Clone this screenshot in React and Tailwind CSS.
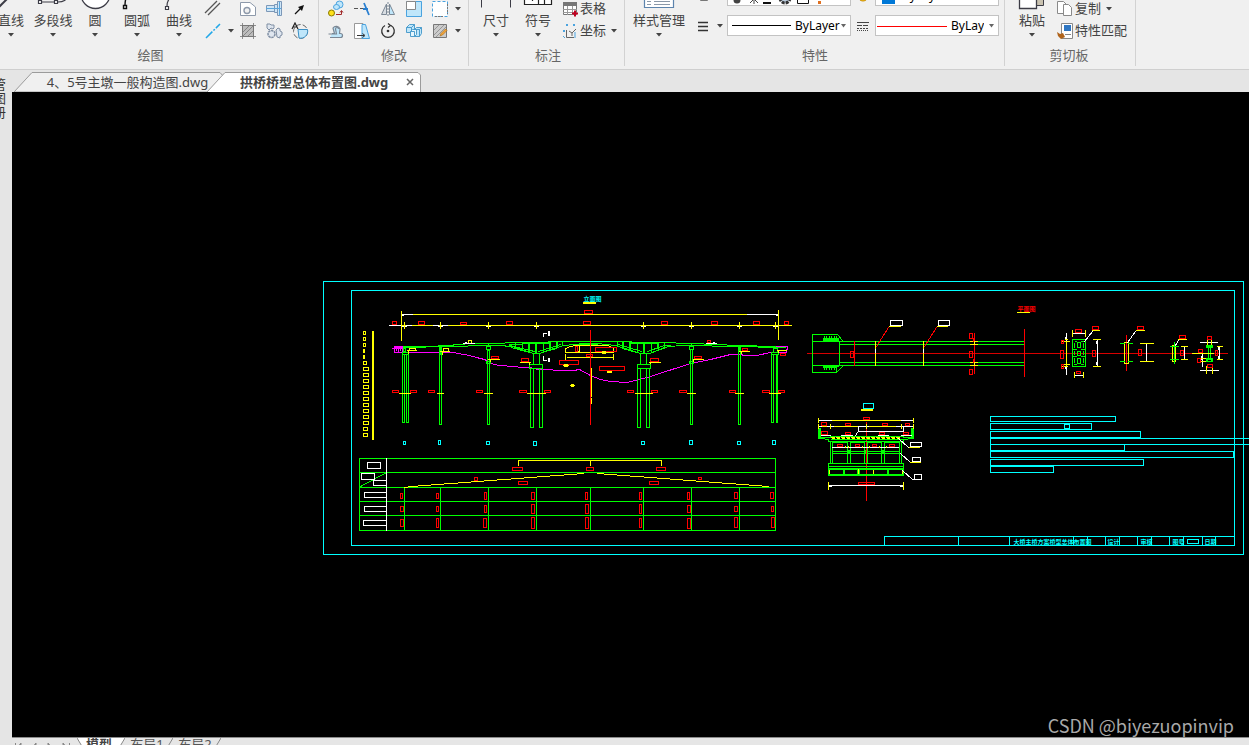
import React from "react";

const GREEN = "#00ff00";
const RED = "#ff0000";
const YELLOW = "#ffff00";
const CYAN = "#00ffff";
const MAGENTA = "#ff00ff";
const WHITE = "#ffffff";

const INK = "#3c3c46";
const BLUE = "#4aa3df";
const SKY = "#bfe6fa";
const STEEL = "#7b8794";

// big ribbon icons, 32 x 32
const bigIcons = {
  line: <path d="M2 30L15 17" stroke={INK} strokeWidth="2" />,
  polyline: (
    <g stroke={INK} fill="#fff" strokeWidth="1.2">
      <path d="M5 23H17M21 23C27 23 29 21 31 17" fill="none" />
      <path d="M1.500 21.500h3v3h-3zM17.500 21.500h3v3h-3z" />
    </g>
  ),
  circle: <circle cx="16.500" cy="15" r="14.500" fill="#fff" stroke={INK} strokeWidth="1.300" />,
  arc: (
    <g stroke="#111" fill="#fff" strokeWidth="1.400">
      <path d="M4 26C4 18 8 10 20 6" fill="none" />
      <path d="M2.500 26.500h3v3h-3z" />
    </g>
  ),
  curve: (
    <g stroke={INK} fill="#fff" strokeWidth="1.200">
      <path d="M4 27C4 20 7 22 8 14" fill="none" />
      <path d="M2.500 27.500h3v3h-3z" />
    </g>
  ),
  dimension: <path d="M1.500 6V28.500M30.500 6V28.500M1.500 12.500H30.500" stroke={INK} fill="none" />,
  symbol: (
    <g stroke="#222" fill="#fff" strokeWidth="1.200">
      <path d="M2.500 8.500h27v17h-27z" />
      <path d="M10.500 8V22M16.500 8V25M22.500 8V25" fill="none" />
    </g>
  ),
  styles: (
    <g stroke="#5d84ad" fill="#fff">
      <path d="M1.500 4.500h29v24h-29z" strokeWidth="1.200" />
      <path d="M4 22.500h4M11 22.500h16M4 25.500h4M11 25.500h16" stroke="#8b98a8" fill="none" />
    </g>
  ),
  paste: (
    <g stroke={INK}>
      <path d="M20.500 6.500h7v20h-7z" fill="#c9c2b0" />
      <path d="M3.500 8.500h17v21h-17z" fill="#fff" strokeWidth="1.300" />
    </g>
  ),
};

// small ribbon icons, 18 x 18
const icons = {
  doubleLine: <path d="M1 13L13 1M4 15L16 3" stroke="#555" strokeWidth="1.300" />,
  ray: <path d="M2 16L16 2" stroke="#22a7e8" strokeWidth="1.500" strokeDasharray="9 1.500 2 1.500" />,
  wipeout: (
    <g stroke="#8d99aa" fill="#fff">
      <path d="M1.500 2.500H11L16.500 7V15.500H1.500Z" />
      <circle cx="8" cy="10.500" r="3" fill="#f0f0f0" strokeWidth="1.400" />
    </g>
  ),
  bolt: (
    <g stroke="#7c98b8" fill="#cfe6f7">
      <path d="M1.500 5.500h8v6h-8zM9.500 4.500h3v8h-3zM12.500 1.500h4v14h-4z" />
      <path d="M1 8.500H16M14.500 2V15" stroke="#5aa6dc" fill="none" />
    </g>
  ),
  arrow: (
    <g>
      <path d="M4 14L10 8" stroke="#111" strokeWidth="1.200" />
      <path d="M13 5L11 11L7 7Z" fill="#111" />
    </g>
  ),
  hatch: (
    <g stroke="#777">
      <path d="M3.500 3.500h11v11h-11z" fill="#bcbcbc" />
      <path d="M1 3.500H17M1 14.500H17M3.500 1V17M14.500 1V17M4 10L10 4M4 14L14 4M9 14L14 9" fill="none" strokeWidth=".8" />
    </g>
  ),
  gears: (
    <g stroke="#7f8ea3" fill="#dfe6ef">
      <path d="M2 2h3l1 1h3v3l-1 1-2-1-2 2-2-2z" />
      <path d="M11 8l2-2 2 1v2l2 1v3l-2 1v2l-3-1z" />
      <circle cx="6.500" cy="12" r="3.500" strokeWidth="1.500" strokeDasharray="2.500 .6" />
    </g>
  ),
  region: (
    <g fill="none">
      <circle cx="9.500" cy="9.500" r="7" stroke="#666" strokeDasharray="5 2" />
      <path d="M7 7.500H16.500A7 7 0 0 1 8 16Z" fill={SKY} stroke="#3b8fc4" />
      <path d="M1 7L4 1L7 7M2 5H6" stroke="#222" strokeWidth="1.200" />
    </g>
  ),
  copyObject: (
    <g>
      <circle cx="12.500" cy="4.500" r="3.500" fill={SKY} stroke={BLUE} />
      <ellipse cx="9.500" cy="7" rx="3" ry="2.500" fill={SKY} stroke={BLUE} />
      <circle cx="4.500" cy="13" r="3" fill="#ffe11a" stroke="#8a7a00" />
      <path d="M9 14.500H14.500V11M13 12.500L14.500 10.500L16 12.500" stroke="#a02828" fill="none" />
    </g>
  ),
  extend: (
    <g>
      <path d="M1 8.500H5M7 8.500H11" stroke="#555" />
      <path d="M11 3L16 15M10 9H15" stroke="#2a7fd0" strokeWidth="1.800" />
    </g>
  ),
  mirror: (
    <g>
      <path d="M7.500 4V14.500H2.500Z" fill="#d8dde2" stroke={STEEL} />
      <path d="M10.500 4V14.500H15.500Z" fill={SKY} stroke={STEEL} />
      <path d="M9 2V16" stroke={STEEL} strokeDasharray="2 1" />
    </g>
  ),
  scale: (
    <g>
      <path d="M1.500 1.500h15v15h-15z" fill={SKY} stroke={BLUE} />
      <path d="M1.500 1.500h9v8h-9z" fill="#fff" stroke="#888" />
    </g>
  ),
  explode: (
    <g>
      <path d="M1.500 1.500h15v15h-15z" fill="#fff" stroke={BLUE} strokeDasharray="3 2" />
      <path d="M4 16.500H13M16.500 4V14" stroke="#777" strokeDasharray="2 1" />
    </g>
  ),
  offset: (
    <g fill={SKY} stroke={STEEL} strokeWidth="1.200">
      <path d="M3 15.500H13.500A2 2 0 0 0 13.500 11.500H12.500L13 7A4 4 0 0 0 6 6L7.500 11.500H5" />
      <path d="M1.500 12H9.500L8.500 7A1.500 1.500 0 0 1 11.500 7" fill="none" />
    </g>
  ),
  stretch: (
    <g>
      <path d="M1.500 1.500H10V16.500H1.500Z" fill="#fff" stroke="#999" />
      <path d="M9 2.500H12.500L16.500 16.500H9Z" fill={SKY} stroke={BLUE} />
      <path d="M4 13.500H11M9.500 11.500L12 13.500L9.500 15.500" stroke="#333" fill="none" />
    </g>
  ),
  rotate: (
    <g fill="none" stroke="#333" strokeWidth="1.300">
      <path d="M6 3.500A6.300 6.300 0 1 0 12 3.500" />
      <path d="M9 1.500L11.500 3.500L9 5.500" />
      <circle cx="9" cy="9" r=".7" fill="#222" />
    </g>
  ),
  array: (
    <g stroke="#3f95c8" fill={SKY} strokeWidth=".9">
      <path d="M1.500 5.500l3-3h5v5l-3 3h-5zM1.500 5.500h5v5M6.500 5.500l3-3" />
      <path d="M9.500 7.500l2-2h5v6l-2 3h-5zM9.500 7.500h5v7M14.500 7.500l2-2" />
      <path d="M5.500 9.500l2-2h4v5l-2 2h-4zM5.500 9.500h4v5" fill="#e6f6fd" />
    </g>
  ),
  editHatch: (
    <g>
      <path d="M2.500 2.500h13v13h-13z" fill="#ccc" stroke="#777" />
      <path d="M3 8L8 3M3 13L13 3M5 15L15 5" stroke="#888" strokeWidth=".8" />
      <path d="M9 14L10 11.500L14.500 7L16 8.500L11.500 13Z" fill="#f2a43a" stroke="#a86a12" strokeWidth=".6" />
    </g>
  ),
  table: (
    <g>
      <path d="M2.500 2.500h13v12h-13z" fill="#fff" stroke="#777" />
      <path d="M2 2h14v4H2z" fill="#777" />
      <path d="M2 9.500H16M2 12.500H16M6.500 6V15M11.500 6V15" stroke="#999" />
      <path d="M11 13.500H17M14 10.500V16.500" stroke="#c00020" strokeWidth="2" />
    </g>
  ),
  coordinate: (
    <g fill="none" stroke="#666">
      <path d="M5.500 8V15.500H13M8 9L11 11L15 7M11 11V14" />
      <path d="M5 2l2 2M7 2L5 4M12 2l2 2M14 2l-2 2M2 8l2 2M4 8l-2 2M2 14l2 2M14 10v6" stroke={BLUE} />
    </g>
  ),
  lineweight: <path d="M4 5.500H14M4 9.500H14M4 13.500H14" stroke="#333" strokeWidth="1.300" />,
  linetype: (
    <g stroke="#444">
      <path d="M3 5.500H15" />
      <path d="M3 8.500H15" strokeDasharray="5 1" />
      <path d="M3 11.500H15" strokeDasharray="2 1" />
      <path d="M3 13.500H15" strokeDasharray="1 1" />
    </g>
  ),
  layer: <path d="M6.500 4.500h7v9h-7zM8 8.500h4M8 11.500h2" stroke="#777" fill="#fff" />,
  colors: (
    <g>
      <circle cx="9" cy="9" r="5" fill="#ffd21a" stroke="#c98a00" />
      <path d="M9 9L13 5L14 9Z" fill="#e04040" />
    </g>
  ),
  copy: (
    <g fill="#fff" stroke="#8a8a8a">
      <path d="M1.500 1.500h6l3 3v9h-9z" />
      <path d="M7.500 4.500h5l3 3v8h-8z" />
    </g>
  ),
  matchProps: (
    <g>
      <path d="M5.500 1.500h11v15h-11z" fill="#fff" stroke="#888" />
      <path d="M8 3h7v6H8z" fill="#2f76c2" />
      <path d="M9 12.500H15" stroke="#888" />
      <path d="M1 10L4 12L7 11L9 15L5 17L2 14Z" fill="#b0641c" />
    </g>
  ),
};

const Icon = ({ name }) => (
  <svg viewBox="0 0 18 18" fill="none" className="size-[18px] shrink-0" aria-hidden="true">
    {icons[name]}
  </svg>
);

const Caret = ({ className = "" }) => (
  <svg viewBox="0 0 6 4" className={`h-1 w-[6px] shrink-0 ${className}`} aria-hidden="true">
    <path d="M0 0h6L3 3.500z" fill="#444" />
  </svg>
);

const BigButton = ({ icon, label, wide }) => (
  <button className={`flex shrink-0 flex-col items-center text-[#444] ${wide ? "w-14" : "w-[42px]"}`}>
    <svg viewBox="0 0 32 32" fill="none" className="size-8" aria-hidden="true">
      {bigIcons[icon]}
    </svg>
    <span className="mt-px whitespace-nowrap leading-4">{label}</span>
    <Caret className="mt-[5px] mb-[3px]" />
  </button>
);

const IconButton = ({ icon, label }) => (
  <button aria-label={label} className="flex w-[26px] justify-center">
    <Icon name={icon} />
  </button>
);

const DropButton = ({ label }) => (
  <button aria-label={label} className="flex h-[18px] w-[9px] items-center justify-center">
    <Caret />
  </button>
);

const TextButton = ({ icon, label, drop }) => (
  <button className="flex h-[18px] items-start gap-px whitespace-nowrap text-[#444]">
    <Icon name={icon} />
    <span className="leading-4">{label}</span>
    {drop ? <Caret className="mx-1 self-center" /> : null}
  </button>
);

const Panel = ({ title, className = "", children }) => (
  <section className={`flex h-[66px] shrink-0 flex-col justify-end border-r border-[#d2d2d2] pb-[3px] ${className}`}>
    <div className="flex items-end">{children}</div>
    <h2 className="mt-[7px] text-center leading-4 text-[#666]">{title}</h2>
  </section>
);

const PropSelect = ({ label, options, className = "", children }) => (
  <div className="relative h-[21px] w-[124px]">
    <select
      aria-label={label}
      className={`block h-full w-full appearance-none border border-[#c3c3c3] bg-white font-['Noto_Sans'] text-xs text-black ${className}`}
    >
      {options.map(o => (
        <option key={o}>{o}</option>
      ))}
    </select>
    <svg viewBox="0 0 124 21" fill="none" className="pointer-events-none absolute inset-0" aria-hidden="true">
      {children}
      <path d="M114 9h5l-2.500 3.500z" fill="#666" />
    </svg>
  </div>
);

const Ribbon = () => (
  <header className="flex h-[70px] shrink-0 items-end overflow-hidden border-b border-[#cfcfcf] bg-[#f0f0f0] pb-[3px]">
    <Panel title="绘图" className="pr-[5px] [&>h2]:pr-3">
      <div className="-ml-[10px] flex">
        <BigButton icon="line" label="直线" />
        <BigButton icon="polyline" label="多段线" />
        <BigButton icon="circle" label="圆" />
        <BigButton icon="arc" label="圆弧" />
        <BigButton icon="curve" label="曲线" />
      </div>
      <div className="grid grid-cols-[26px_9px_26px_26px_26px] gap-y-1">
        <IconButton icon="doubleLine" label="双线" />
        <span />
        <IconButton icon="wipeout" label="区域覆盖" />
        <IconButton icon="bolt" label="零件" />
        <IconButton icon="arrow" label="箭头" />
        <IconButton icon="ray" label="射线" />
        <DropButton label="更多线型" />
        <IconButton icon="hatch" label="填充" />
        <IconButton icon="gears" label="机械" />
        <IconButton icon="region" label="局部视图" />
      </div>
    </Panel>

    <Panel title="修改" className="pr-[6px] pl-1 [&>h2]:pl-[3px]">
      <div className="grid grid-cols-[26px_26px_26px_26px_26px_9px] gap-y-1">
        <IconButton icon="copyObject" label="复制对象" />
        <IconButton icon="extend" label="延伸" />
        <IconButton icon="mirror" label="镜像" />
        <IconButton icon="scale" label="缩放" />
        <IconButton icon="explode" label="分解" />
        <DropButton label="更多分解" />
        <IconButton icon="offset" label="偏移" />
        <IconButton icon="stretch" label="拉伸" />
        <IconButton icon="rotate" label="旋转" />
        <IconButton icon="array" label="阵列" />
        <IconButton icon="editHatch" label="编辑填充" />
        <DropButton label="更多编辑" />
      </div>
    </Panel>

    <Panel title="标注" className="pr-[3px] pl-[6px]">
      <BigButton icon="dimension" label="尺寸" />
      <BigButton icon="symbol" label="符号" />
      <div className="ml-0.5 flex flex-col gap-1">
        <TextButton icon="table" label="表格" />
        <TextButton icon="coordinate" label="坐标" drop />
      </div>
    </Panel>

    <Panel title="特性" className="pr-[5px] pl-[6px]">
      <BigButton icon="styles" label="样式管理" wide />
      <div className="ml-[7px] grid grid-cols-[18px_9px_124px_18px_124px] items-center gap-x-[3px] gap-y-[9px] pb-1">
        <Icon name="layer" />
        <span />
        <PropSelect label="图层" options={["0"]} className="pl-[96px]">
          <circle cx="10" cy="15" r="3.500" fill="#444" />
          <path d="M27 9V19M22 14H32M23 10L31 18M31 10L23 18" stroke="#444" />
          <path d="M36 17h8v2h-8z" fill="#111" />
          <circle cx="58" cy="13" r="5" stroke="#333" strokeWidth="3" strokeDasharray="3 1" fill="#bcd" />
          <path d="M70.500 6.500h11v12h-11z" fill="#fff" stroke="#111" />
          <path d="M91 16h3v3h-3z" fill="#e07020" />
        </PropSelect>
        <Icon name="colors" />
        <PropSelect label="颜色" options={["ByLayer"]} className="pl-[26px]">
          <path d="M7 9h13v10H7z" fill="#0078d7" />
        </PropSelect>
        <Icon name="lineweight" />
        <DropButton label="线宽设置" />
        <PropSelect label="线宽" options={["ByLayer"]} className="pr-2 pl-[67px]">
          <path d="M5 10.500H64" stroke="#000" />
        </PropSelect>
        <Icon name="linetype" />
        <PropSelect label="线型" options={["ByLayer"]} className="pr-[14px] pl-[75px]">
          <path d="M2 11.500H72" stroke="#f00" />
        </PropSelect>
      </div>
    </Panel>

    <Panel title="剪切板" className="pr-2 pl-[6px]">
      <BigButton icon="paste" label="粘贴" />
      <div className="ml-[3px] flex flex-col gap-1">
        <TextButton icon="copy" label="复制" drop />
        <TextButton icon="matchProps" label="特性匹配" />
      </div>
    </Panel>
  </header>
);

const FileTabs = () => (
  <nav className="flex h-[22px] shrink-0 items-end pl-0.5">
    <button className="relative h-5 w-[210px] pl-[17px] text-[#444]">
      <svg viewBox="0 0 210 20" className="absolute inset-0 h-full w-full" aria-hidden="true">
        <path d="M0 20L18 .5H206L210 5V20Z" fill="#f0f0f0" stroke="#9b9b9b" />
      </svg>
      <span className="relative block whitespace-nowrap leading-[18px]">4、5号主墩一般构造图.dwg</span>
    </button>
    <div className="relative -ml-[17px] flex h-5 w-[214px] items-center justify-between pr-[5px] pl-[33px]">
      <svg viewBox="0 0 214 20" className="absolute inset-0 h-full w-full" aria-hidden="true">
        <path d="M0 20L18 .5H211L213.500 3V20" fill="#fff" stroke="#9b9b9b" />
      </svg>
      <button className="relative whitespace-nowrap font-bold leading-[18px] text-[#444]">拱桥桥型总体布置图.dwg</button>
      <button aria-label="关闭" className="relative flex size-3 items-center justify-center">
        <svg viewBox="0 0 8 8" className="size-2" aria-hidden="true">
          <path d="M1 1L7 7M7 1L1 7" stroke="#666" strokeWidth="1.500" />
        </svg>
      </button>
    </div>
  </nav>
);

// corner coordinates of each box: [left, top, right, bottom]
const Boxes = ({ color, of }) => (
  <path stroke={color} d={of.map(([l, t, r, b]) => `M${l} ${t}H${r}V${b}H${l}Z`).join("")} />
);

const Lines = ({ color, d }) => <path stroke={color} d={d} />;

// horizontal runs: [left, y, right]
const Runs = ({ color, of }) => (
  <path stroke={color} d={of.map(([l, y, r]) => `M${l} ${y}H${r}`).join("")} />
);

const Frame = () => (
  <g>
    <Boxes color={CYAN} of={[[323, 281, 1243, 554], [351, 290, 1234, 545], [1187, 539, 1198, 543]]} />
    <Lines color={CYAN} d="M884 545V536H1234" />
    <Lines
      color={CYAN}
      d={[958, 1009, 1073, 1087, 1105, 1119, 1137, 1151, 1169, 1183, 1202, 1215].map(x => `M${x} 536V545`).join("")}
    />
    <g fill={CYAN} fontSize="6" fontWeight="700">
      <text x="1013" y="543">大桥主桥方案桥型总体布置图</text>
      <text x="1107" y="543">设计</text>
      <text x="1140" y="543">审核</text>
      <text x="1172" y="543">图号</text>
      <text x="1204" y="543">日期</text>
    </g>
  </g>
);

const Notes = () => (
  <g>
    <Boxes
      color={CYAN}
      of={[
        [990, 416, 1115, 421], [990, 423, 1091, 429], [1064, 424, 1069, 428], [990, 431, 1140, 437],
        [990, 444, 1124, 450], [990, 451, 1233, 457], [990, 459, 1143, 465], [990, 466, 1053, 472],
      ]}
    />
    <Lines color={CYAN} d="M1260 438H990V444H1260" />
  </g>
);

const scaleMarks = Array.from({ length: 10 }, (_, i) => [363, 367 + 6 * i, 368, 370 + 6 * i]);
const axes = [404, 440, 488, 536, 643, 691, 739, 775];

const Elevation = () => (
  <g>
    <text x="583" y="300" fill={CYAN} fontSize="6" fontWeight="700">立面图</text>
    <Boxes color={YELLOW} of={[[583, 302, 595, 303]]} />

    <Boxes
      color={YELLOW}
      of={[
        [372, 331, 373, 439], [363, 331, 365, 334], [363, 337, 365, 340], [363, 343, 365, 346],
        [363, 349, 364, 352], [363, 355, 364, 358], [363, 361, 366, 364],
        ...scaleMarks, [363, 427, 367, 430], [363, 433, 367, 436],
      ]}
    />

    {/* overall and span dimensions */}
    <Lines color={YELLOW} d="M401 311V340M778 310V339M401 314H778M401 325H791" />
    <Lines color={YELLOW} d={axes.map(x => `M${x} 322V328`).join("")} />
    <Lines color={WHITE} d={axes.map(x => `M${x - 2} 326H${x - 1}M${x + 1} 326H${x + 2}`).join("")} />
    <Runs color={WHITE} of={[[402, 314, 412], [747, 314, 777], [389, 325, 400], [406, 325, 411], [433, 325, 438], [442, 325, 447], [402, 315, 403], [776, 315, 777]]} />
    <Boxes
      color={RED}
      of={[
        [392, 321, 396, 324], [418, 321, 424, 324], [460, 322, 466, 324], [506, 321, 512, 324],
        [583, 321, 590, 324], [584, 310, 592, 313], [661, 321, 667, 324], [711, 321, 717, 324],
        [753, 321, 759, 324], [784, 321, 788, 324],
      ]}
    />

    {/* ground line */}
    <Lines
      color={MAGENTA}
      d="M394 346V352H453L463 354L469 355L476 357L484 359L490 362L493 364L500 365L512 366L522 367H529L538 369H550L555 370H573L579 369L590 375L600 379L610 381L627 382L650 376L690 363L710 359L730 354H741L743 355H756L770 352H786V350L787 348V346H775"
    />
    <Lines color={MAGENTA} d="M394 346H403M392 348H403M394 347H402M396 349V350M398 349V351M400 349V350M402 349V351" />

    {/* deck and haunched girders */}
    <Lines color={GREEN} d="M403 346H422L453 345V344L477 343H504L505 342H548V341H631V342H675L676 343H703L704 344H726L727 345H756L757 346H775L776 347H785" />
    <Lines color={GREEN} d="M403 347H425V346H467L468 345H505M676 345H711L712 346H757L758 347H785" />
    <Lines color={GREEN} d="M522 343H550M630 343H658M658 342H664V345H670" />
    <Lines color={GREEN} d="M505 346H512L533 353H539L550 349L557 347L563 345L575 344L583 343H597L605 344L615 345L640 353H649L668 346H674" />
    <Lines color={GREEN} d="M509 344H522M509 345L534 351M538 351L560 344M575 345L583 344H597M618 344L641 351M647 351L664 345M511 347L529 352M545 351L556 348M622 348L636 352M652 352L664 347" />
    <Lines color={GREEN} d="M515 343V347M522 343V349M528 343V350M529 343V351M535 343V352M536 343V352M543 343V350M549 342V348M550 342V348M556 342V346M557 342V346M562 342V345M617 342V345M622 342V347M623 342V347M629 342V349M630 342V350M637 343V351M643 343V352M644 343V352M651 343V351M657 343V348M658 343V348M664 343V346" />

    {/* piers */}
    <Boxes
      color={GREEN}
      of={[
        [402, 354, 404, 422], [406, 354, 408, 422], [402, 352, 408, 354], [403, 348, 405, 351],
        [439, 354, 441, 424], [439, 347, 441, 353],
        [487, 350, 489, 424], [486, 346, 490, 349], [486, 361, 490, 363],
        [533, 353, 539, 364], [529, 364, 542, 368], [530, 368, 533, 427], [539, 368, 542, 427],
        [640, 353, 646, 364], [637, 364, 650, 368], [637, 368, 640, 427], [646, 368, 649, 427],
        [690, 349, 692, 424], [689, 346, 693, 349], [689, 361, 693, 363],
        [738, 347, 740, 424],
        [771, 354, 773, 422], [776, 354, 777, 422], [771, 352, 778, 354], [773, 348, 777, 352],
      ]}
    />
    <Lines color={GREEN} d="M440 347V353M488 343V346M691 343V346M739 347V350" />

    {/* level marks */}
    <Boxes color={YELLOW} of={[[409, 348, 415, 350], [443, 348, 448, 351], [468, 340, 471, 343], [575, 345, 579, 351]]} />
    <Runs
      color={YELLOW}
      of={[
        [407, 350, 416], [440, 351, 449], [488, 359, 499], [520, 362, 530], [649, 362, 660],
        [693, 359, 703], [739, 351, 749], [777, 350, 786],
        [399, 393, 410], [437, 393, 443], [484, 393, 492], [527, 393, 545],
        [635, 393, 652], [687, 393, 695], [735, 393, 743], [769, 393, 780],
      ]}
    />
    <Lines color={YELLOW} d="M408 350V353M442 351V354M490 359V361M529 362V364M650 362V363M693 359V361M741 351V353M778 350V352" />
    <Runs color={WHITE} of={[[463, 343, 474], [465, 342, 466], [706, 343, 716], [713, 342, 714]]} />
    <Lines color={WHITE} d="M543 336V333H546M543 356V360H546M548 331V335M549 331V335M548 358V361M549 358V361" />
    <Boxes
      color={RED}
      of={[
        [491, 356, 498, 358], [521, 358, 528, 361], [650, 358, 658, 361], [694, 356, 701, 358],
        [742, 348, 747, 350], [780, 353, 785, 355], [707, 340, 710, 342],
        [392, 390, 398, 392], [410, 390, 416, 392], [428, 390, 434, 392], [476, 390, 482, 392],
        [519, 390, 526, 392], [544, 390, 550, 392], [627, 390, 633, 392], [651, 390, 657, 392],
        [679, 390, 686, 392], [729, 390, 735, 392], [762, 390, 769, 392], [778, 390, 784, 392],
      ]}
    />

    {/* navigation clearance */}
    <Lines color={YELLOW} d="M565 352V348L570 346L575 345H608L613 348V352M565 352H613M565 354V359M613 354V359M567 357H612" />
    <Boxes
      color={RED}
      of={[
        [575, 346, 577, 351], [595, 347, 616, 351], [586, 354, 592, 356],
        [559, 360, 578, 364], [599, 366, 624, 370],
      ]}
    />
    <Lines color={YELLOW} d="M602 351H605M602 352H605M602 353H605M564 364H567M563 365H568M564 366H567M607 371H611M607 372H611M571 384H573M570 385H574M571 386H573" />
    <Lines color={YELLOW} d="M591 368V396M591 398V403" />
    <Lines color={RED} d="M590 330V424" />
    <Boxes
      color={CYAN}
      of={[
        [403, 441, 405, 444], [438, 440, 440, 444], [486, 441, 489, 444], [533, 441, 536, 445],
        [641, 441, 644, 444], [689, 440, 692, 444], [737, 441, 740, 444], [772, 440, 775, 444],
      ]}
    />
  </g>
);

const ProfileTable = () => (
  <g>
    <Boxes color={GREEN} of={[[359, 458, 775, 530]]} />
    <Lines color={GREEN} d="M359 472H775M359 487H775M359 501H775M359 515H775M360 486L386 472" />
    <Lines color={GREEN} d={[404, 440, 488, 536, 590, 643, 691, 739].map(x => `M${x} 487V530`).join("")} />
    <Lines color={WHITE} d="M386 458V530" />
    <Boxes
      color={WHITE}
      of={[
        [367, 462, 380, 468], [361, 473, 374, 479], [373, 480, 386, 485],
        [364, 492, 386, 497], [364, 506, 386, 511], [363, 520, 386, 525],
      ]}
    />
    <Lines color={YELLOW} d="M518 465V460H661V465M590 460V465M404 487L411 486L583 473M597 473L768 486" />
    <Boxes
      color={RED}
      of={[
        [512, 467, 522, 470], [586, 467, 593, 470], [656, 467, 665, 470],
        [474, 477, 477, 480], [518, 481, 527, 484], [649, 481, 658, 484], [698, 477, 701, 479],
        [400, 493, 402, 498], [436, 493, 438, 498], [484, 492, 486, 499], [531, 492, 534, 499],
        [585, 492, 587, 499], [639, 492, 641, 499], [687, 492, 689, 499], [734, 492, 737, 498], [770, 492, 773, 498],
        [400, 506, 403, 511], [436, 506, 438, 511], [484, 505, 486, 512], [531, 504, 534, 513],
        [585, 504, 588, 513], [639, 504, 641, 513], [687, 505, 690, 512], [734, 506, 737, 511], [771, 506, 773, 511],
        [400, 519, 403, 526], [436, 518, 438, 527], [483, 518, 486, 527], [531, 517, 534, 528],
        [585, 517, 588, 528], [639, 518, 641, 527], [687, 518, 690, 528], [734, 517, 737, 527], [771, 517, 774, 527],
      ]}
    />
  </g>
);

const PlanView = () => (
  <g>
    <text x="1017" y="310" fill={RED} fontSize="6" fontWeight="700">平面图</text>
    <Runs color={YELLOW} of={[[1017, 312, 1029]]} />
    <Lines color="#d80000" d="M807 353H1227" />
    <Lines color={GREEN} d="M837 334H812V372H836M812 341H1024M839 344H1024M839 362H1024M812 365H1024M839 341V365M837 334L842 340M836 336V341M836 372L842 366M836 365V371" />
    <Lines color={GREEN} d="M823 338H838M823 339H838M823 340H838M823 366H838M823 367H836" />
    <Lines color={GREEN} d={[824, 826, 829, 831, 834].map(x => `M${x} 336V338M${x} 368V369`).join("")} />
    <Lines color={YELLOW} d="M875 341V365M923 341V365M970 341H977M970 344H977M970 362H977M970 365H977M974 341V344M974 362V365" />
    <Lines color={WHITE} d="M875 349V352M923 349V352" />
    <Lines color={RED} d="M854 341V365M974 333V340M974 345V361M974 366V373M973 338V341M973 359V362M1024 329V376M876 346L888 327M924 346L936 327" />
    <Boxes color={RED} of={[[850, 351, 853, 357], [969, 333, 972, 338], [969, 351, 972, 357], [969, 369, 972, 374]]} />
    <Boxes color={WHITE} of={[[890, 320, 902, 325], [938, 320, 949, 325]]} />
    <Runs color={YELLOW} of={[[889, 326, 900], [937, 326, 947]]} />
  </g>
);

const PierSections = () => (
  <g>
    <Boxes color={GREEN} of={[[1072, 339, 1085, 366], [1077, 342, 1080, 347], [1077, 351, 1080, 355], [1077, 358, 1080, 363]]} />
    <Lines color={GREEN} d="M1072 349H1076M1081 349H1085M1072 356H1076M1081 356H1085M1075 341H1076M1081 341H1083M1074 364H1076M1081 364H1083M1074 343V347M1083 343V347M1074 351V354M1083 351V354M1074 358V362M1083 358V362" />
    <Lines color={WHITE} d="M1072 333H1085M1074 375H1083M1097 339V366M1096 341V343M1096 362V364M1066 333V340M1065 337V339M1066 367V374M1065 366V368M1092 331L1084 341" />
    <Lines color={YELLOW} d="M1072 330V336M1085 330V336M1074 372V377M1083 372V377M1093 339H1100M1093 366H1100M1066 341V365M1062 341H1069M1062 366H1067M1062 364H1069M1065 339H1067M1092 330H1099" />

    <Lines color={RED} d="M1126 335V370" />
    <Boxes color={YELLOW} of={[[1124, 342, 1128, 363]]} />
    <Lines color={GREEN} d="M1120 343H1124M1128 343H1132M1120 361H1124M1128 361H1132" />
    <Lines color={WHITE} d="M1135 331L1127 342M1146 344V360" />
    <Lines color={YELLOW} d="M1136 330H1144M1140 343H1153M1140 361H1153" />

    <Boxes color={YELLOW} of={[[1172, 345, 1175, 361]]} />
    <Lines color={GREEN} d="M1174 342V363M1170 346H1178M1170 359H1178" />
    <Lines color={WHITE} d="M1178 340L1175 345M1184 347V358" />
    <Lines color={YELLOW} d="M1178 339H1186M1181 346H1187M1181 359H1187" />

    <Lines color={GREEN} d="M1206 345H1212M1206 346H1212M1206 347H1212M1208 348V357M1210 348V357M1206 358H1212M1206 359H1212M1206 361H1212M1206 360H1207M1211 360H1212" />
    <Lines color={WHITE} d="M1200 342H1217M1200 370H1218M1202 353V366M1201 356V359M1219 346V359M1218 347V349M1218 356V358" />
    <Lines color={YELLOW} d="M1192 353H1213M1207 340V344M1211 340V344M1206 366V373M1212 366V373M1217 346H1222M1217 359H1222M1201 358H1205M1201 361H1205" />
    <Boxes
      color={RED}
      of={[
        [1075, 329, 1081, 332], [1076, 371, 1080, 373], [1061, 340, 1063, 343], [1060, 350, 1063, 358],
        [1061, 364, 1063, 368], [1092, 350, 1095, 356], [1092, 326, 1098, 329],
        [1137, 326, 1143, 329], [1138, 349, 1141, 355], [1179, 335, 1185, 338], [1180, 350, 1183, 355],
        [1207, 336, 1211, 339], [1198, 349, 1202, 352], [1197, 358, 1200, 362], [1215, 350, 1217, 355],
        [1207, 364, 1212, 367],
      ]}
    />
  </g>
);

const CrossSection = () => (
  <g>
    <Boxes color={CYAN} of={[[863, 403, 873, 408]]} />
    <Boxes color={YELLOW} of={[[861, 409, 872, 410]]} />
    <Lines color={RED} d="M866 422V500" />

    {/* deck slab, ribs and cap beam */}
    <Lines color={GREEN} d="M818 428V438H824L825 439H828V441H903V439H907L908 438H913V428M819 428V437M820 428V437M912 428V437M911 428V437M830 436H903M831 439H902M820 437H830M903 437H911" />
    <Lines color={GREEN} d="M830 441V463M832 442V463M847 442V463M850 442V463M864 442V463M867 442V463M881 442V463M884 442V463M899 442V463M901 441V463" />
    <Lines color={GREEN} d="M832 451H847M850 451H864M867 451H881M884 451H899M832 453H847M850 453H864M867 453H881M884 453H899M833 442H846M851 442H863M868 442H880M885 442H898M848 450V453M849 450V453M865 450V453M882 450V453M883 450V453" />
    <Boxes color={GREEN} of={[[828, 463, 903, 468], [828, 469, 903, 475]]} />
    <Lines color={GREEN} d="M828 466H903M828 474H903M829 469V475M843 469V475M844 469V475M857 469V475M859 469V475M873 469V475M887 469V475M888 469V475M902 469V475" />
    <path d="M831 437H900" stroke={YELLOW} strokeDasharray="3 2" />
    <path d="M832 438H900" stroke={YELLOW} strokeDasharray="2 3" />
    <Lines color={YELLOW} d="M829 470V473M858 469V473M873 470V473M902 470V473" />

    <Lines color={WHITE} d="M818 420H831M901 420H913M818 426H913M832 447H898M828 485H903M829 486H831M900 486H902" />
    <Lines color={YELLOW} d="M832 420H900M822 426H826M834 426H857M869 426H895M818 418V422M913 418V422M818 424V428M913 424V428M830 424V428M866 424V428M901 424V428M828 482V489M903 482V489" />
    <Lines color={WHITE} d="M858 427V431H903V427M857 432L855 435M821 435H830M841 435H852M878 435H888M901 435H911" />
    <Lines color={YELLOW} d="M845 446V447M848 446V447M862 446V447M869 446V447M879 446V447M886 446V447" />
    <Boxes
      color={RED}
      of={[
        [863, 417, 869, 419], [821, 422, 826, 425], [845, 423, 850, 425], [882, 423, 887, 425], [905, 423, 909, 425],
        [821, 431, 827, 434], [845, 432, 850, 434], [879, 432, 884, 434], [903, 432, 908, 434],
        [837, 444, 842, 446], [855, 444, 859, 446], [872, 444, 876, 446], [889, 444, 894, 446], [858, 482, 874, 484],
      ]}
    />

    {/* leaders */}
    <Boxes color={WHITE} of={[[910, 442, 921, 446], [912, 457, 920, 461], [914, 474, 921, 479]]} />
    <Lines color={WHITE} d="M898 438L908 447M900 453L910 462M902 470L912 479H914" />
    <Runs color={YELLOW} of={[[909, 447, 919], [910, 462, 920]]} />
  </g>
);

const Drawing = () => (
  <svg
    viewBox="12 92 1237 645"
    preserveAspectRatio="xMinYMin slice"
    className="block h-full w-full font-['Noto_Sans_CJK_SC',sans-serif]"
    role="img"
    aria-label="拱桥桥型总体布置图"
  >
    <g transform="translate(.5 .5)" fill="none" strokeLinecap="square" shapeRendering="crispEdges">
      <Frame />
      <Notes />
      <Elevation />
      <ProfileTable />
      <PlanView />
      <PierSections />
      <CrossSection />
    </g>
  </svg>
);

const LayoutTabs = () => (
  <nav className="flex h-2 shrink-0 items-start overflow-hidden border-t border-[#8c8c8c] bg-[#e6e6e6] text-[#555]">
    <svg viewBox="0 0 65 20" fill="#888" stroke="#888" className="h-5 w-[65px] shrink-0" aria-hidden="true">
      <path d="M3.500 5V15M9 5V15L5 10ZM24 5V15L20 10ZM36 5V15L40 10ZM51 5V15L55 10ZM57.500 5V15" />
    </svg>
    <button className="relative h-5 w-12 shrink-0">
      <svg viewBox="0 0 48 20" className="absolute inset-0" aria-hidden="true">
        <path d="M0 0L12 20H36L48 0Z" fill="#fff" />
        <path d="M0 0L12 20H36L48 0" fill="none" stroke="#888" />
      </svg>
      <span className="relative block whitespace-nowrap pr-1 pb-2 leading-3 font-bold text-[#444]">模型</span>
    </button>
    {["布局1", "布局2"].map(name => (
      <button key={name} className="relative h-5 w-12 shrink-0">
        <svg viewBox="0 0 48 20" className="absolute inset-0" aria-hidden="true">
          <path d="M36 20L48 0" stroke="#888" />
        </svg>
        <span className="relative block whitespace-nowrap pr-1 pb-2 leading-3">{name}</span>
      </button>
    ))}
  </nav>
);

export default function App() {
  return (
    <div className="flex h-screen flex-col overflow-hidden bg-[#e5e5e5] font-['Noto_Sans','Noto_Sans_CJK_SC',sans-serif] text-[13px] leading-5">
      <Ribbon />
      <div className="flex min-h-0 flex-1">
        <aside className="w-3 shrink-0 overflow-hidden pt-[7px]">
          <button className="-ml-[7px] block w-[13px] text-left leading-[14px] break-all text-[#333]">管图册</button>
        </aside>
        <div className="flex min-w-0 flex-1 flex-col">
          <FileTabs />
          <main className="relative min-h-0 flex-1 overflow-hidden bg-black">
            <Drawing />
            <p className="absolute right-[15px] bottom-0 font-['Noto_Sans_CJK_SC',sans-serif] text-lg leading-6 text-[#a9a9a9]">
              CSDN @biyezuopinvip
            </p>
          </main>
          <LayoutTabs />
        </div>
      </div>
    </div>
  );
}
